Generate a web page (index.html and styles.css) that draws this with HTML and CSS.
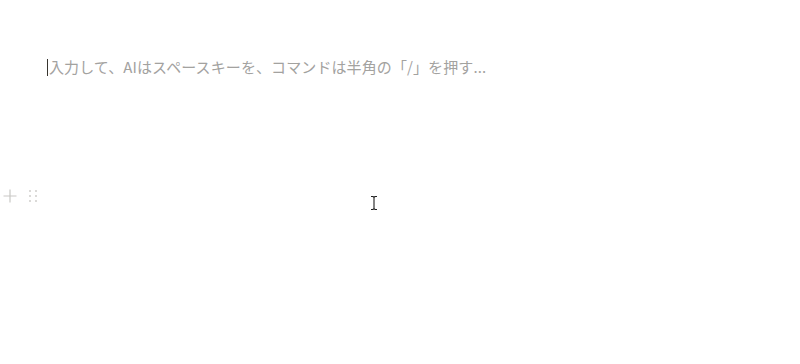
FILE: index.html
```html
<!DOCTYPE html>
<html lang="ja">
<head>
<meta charset="utf-8">
<link rel="stylesheet" href="styles.css">
</head>
<body>
<div class="page">
  <div class="editor">
    <div class="line"><span class="caret"></span><span class="placeholder">入力して、AIはスペースキーを、コマンドは半角の「/」を押す...</span></div>
  </div>
  <div class="block-row">
    <div class="handles">
      <svg class="plus" width="14" height="14" viewBox="0 0 14 14"><path d="M7 0.5V13.5M0.5 7H13.5" stroke="#c9c8c5" stroke-width="1.2" fill="none"/></svg>
      <svg class="grip" width="10" height="14" viewBox="0 0 10 14"><g fill="#cfcecb"><circle cx="2" cy="2" r="1"/><circle cx="8" cy="2" r="1"/><circle cx="2" cy="7" r="1"/><circle cx="8" cy="7" r="1"/><circle cx="2" cy="12" r="1"/><circle cx="8" cy="12" r="1"/></g></svg>
    </div>
  </div>
  <svg class="ibeam" width="8" height="16" viewBox="0 0 8 16"><path d="M1 1.5H3L4 2.5L5 1.5H7M4 2.5V13.5M1 14.5H3L4 13.5L5 14.5H7" stroke="#222" stroke-width="1.1" fill="none"/></svg>
</div>
</body>
</html>
```
FILE: styles.css
```css
html, body {
  margin: 0;
  padding: 0;
  background: #ffffff;
}
.page {
  position: relative;
  width: 800px;
  height: 364px;
  overflow: hidden;
  font-family: "Noto Sans CJK JP", "Noto Sans", sans-serif;
}
.editor {
  padding: 56px 0 0 47px;
}
.line {
  display: flex;
  align-items: center;
  height: 22px;
}
.caret {
  width: 1px;
  height: 17px;
  background: #37352f;
  margin-right: 1px;
}
.placeholder {
  font-size: 15px;
  line-height: 22px;
  color: #a3a29f;
  letter-spacing: 0.1px;
}
.block-row {
  padding: 111px 0 0 3px;
}
.handles {
  display: flex;
  align-items: center;
  gap: 11px;
}
.ibeam {
  position: absolute;
  left: 370px;
  top: 195px;
}
```
